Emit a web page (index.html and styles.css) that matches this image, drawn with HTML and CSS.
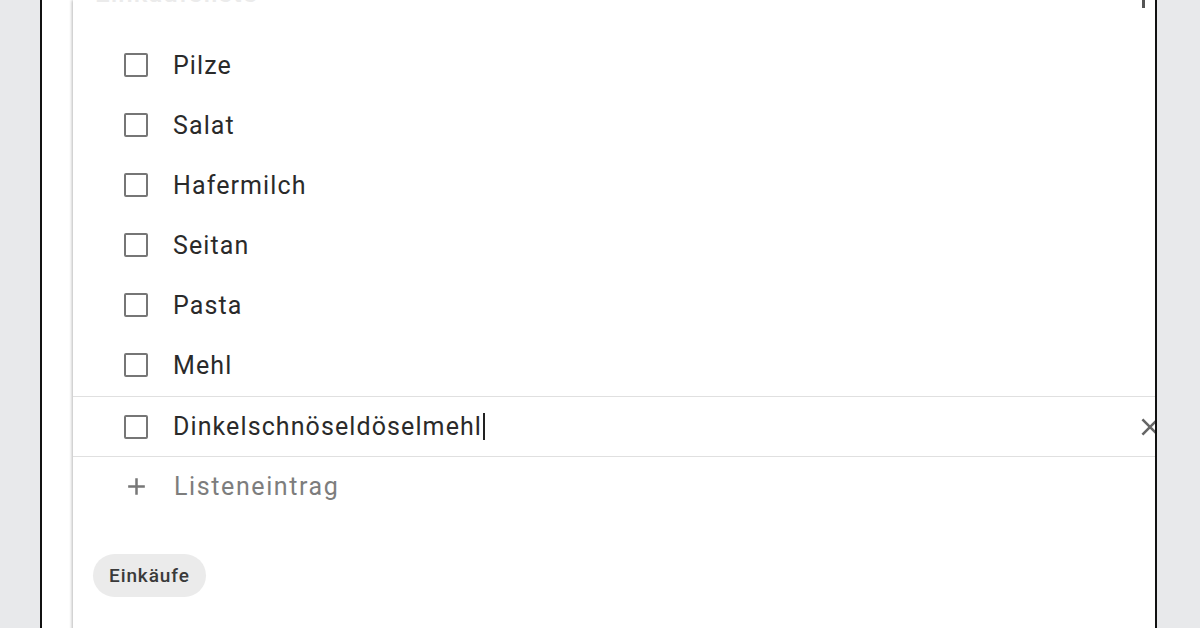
FILE: index.html
```html
<!DOCTYPE html>
<html lang="de">
<head>
<meta charset="utf-8">
<title>Einkäufe</title>
<link rel="stylesheet" href="styles.css">
</head>
<body>
<div class="frame">
  <div class="card">
    <div class="head">
      <div class="title">Einkaufsliste</div>
      <div class="pin"></div>
    </div>
    <ul class="list">
      <li class="item"><span class="box"></span><span class="label">Pilze</span></li>
      <li class="item"><span class="box"></span><span class="label">Salat</span></li>
      <li class="item"><span class="box"></span><span class="label">Hafermilch</span></li>
      <li class="item"><span class="box"></span><span class="label">Seitan</span></li>
      <li class="item"><span class="box"></span><span class="label">Pasta</span></li>
      <li class="item"><span class="box"></span><span class="label">Mehl</span></li>
      <li class="item active"><span class="box"></span><span class="label">Dinkelschnöseldöselmehl<span class="caret"></span></span>
        <svg class="close" viewBox="0 0 24 24" width="26" height="26"><path d="M5 5 L19 19 M19 5 L5 19" stroke="#666" stroke-width="2.4" fill="none"/></svg>
      </li>
      <li class="item add">
        <svg class="plus" viewBox="0 0 24 24" width="25" height="25"><path d="M12 4 V20 M4 12 H20" stroke="#777" stroke-width="2.4" fill="none"/></svg>
        <span class="label">Listeneintrag</span>
      </li>
    </ul>
    <div class="chips"><span class="chip">Einkäufe</span></div>
  </div>
</div>
</body>
</html>
```
FILE: styles.css
```css
html, body {
  margin: 0;
  padding: 0;
}
body {
  background: #e8e9eb;
  height: 628px;
  overflow: hidden;
  font-family: Roboto, "Noto Sans", "Liberation Sans", sans-serif;
}
.frame {
  margin-left: 40px;
  width: 1117px;
  height: 628px;
  box-sizing: border-box;
  background: #fff;
  border-left: 2px solid #111;
  border-right: 2px solid #111;
  overflow: hidden;
  padding-left: 31px;
}
.card {
  width: 1120px;
  height: 700px;
  background: #fff;
  box-shadow: -1px 0 3px rgba(0,0,0,0.28);
}
.head {
  height: 35px;
  display: flex;
  justify-content: space-between;
  position: relative;
}
.title {
  margin-left: 22px;
  margin-top: -22px;
  font-size: 26px;
  letter-spacing: 1px;
  color: #ebebeb;
  font-weight: 500;
}
.pin {
  position: absolute;
  left: 1069px;
  top: 0;
  width: 3px;
  height: 8px;
  background: #555;
}
.list {
  list-style: none;
  margin: 0;
  padding: 0;
}
.item {
  height: 60px;
  display: flex;
  align-items: center;
  padding-left: 51px;
  box-sizing: border-box;
}
.box {
  width: 24px;
  height: 24px;
  box-sizing: border-box;
  border: 2px solid #767676;
  border-radius: 2px;
  flex: none;
}
.label {
  margin-left: 25px;
  font-size: 25px;
  letter-spacing: 1.1px;
  color: #2a2a2a;
  display: flex;
  align-items: center;
}
.active {
  border-top: 1px solid #e0e0e0;
  border-bottom: 1px solid #e0e0e0;
  height: 61px;
  margin-top: 1px;
}
.caret {
  display: inline-block;
  width: 2px;
  height: 27px;
  background: #222;
  margin-left: 1px;
}
.close {
  margin-left: auto;
  margin-right: 30px;
}
.add {
  height: 58px;
}
.plus {
  flex: none;
  margin-left: 0;
}
.add .label {
  margin-left: 25px;
  color: #7d7d7d;
  letter-spacing: 1.6px;
}
.chips {
  padding-left: 20px;
  margin-top: 39px;
}
.chip {
  display: inline-flex;
  align-items: center;
  height: 43px;
  padding: 0 16px;
  border-radius: 22px;
  background: #ebebeb;
  font-size: 19px;
  font-weight: 500;
  letter-spacing: 0.9px;
  color: #3a3a3a;
}
```
